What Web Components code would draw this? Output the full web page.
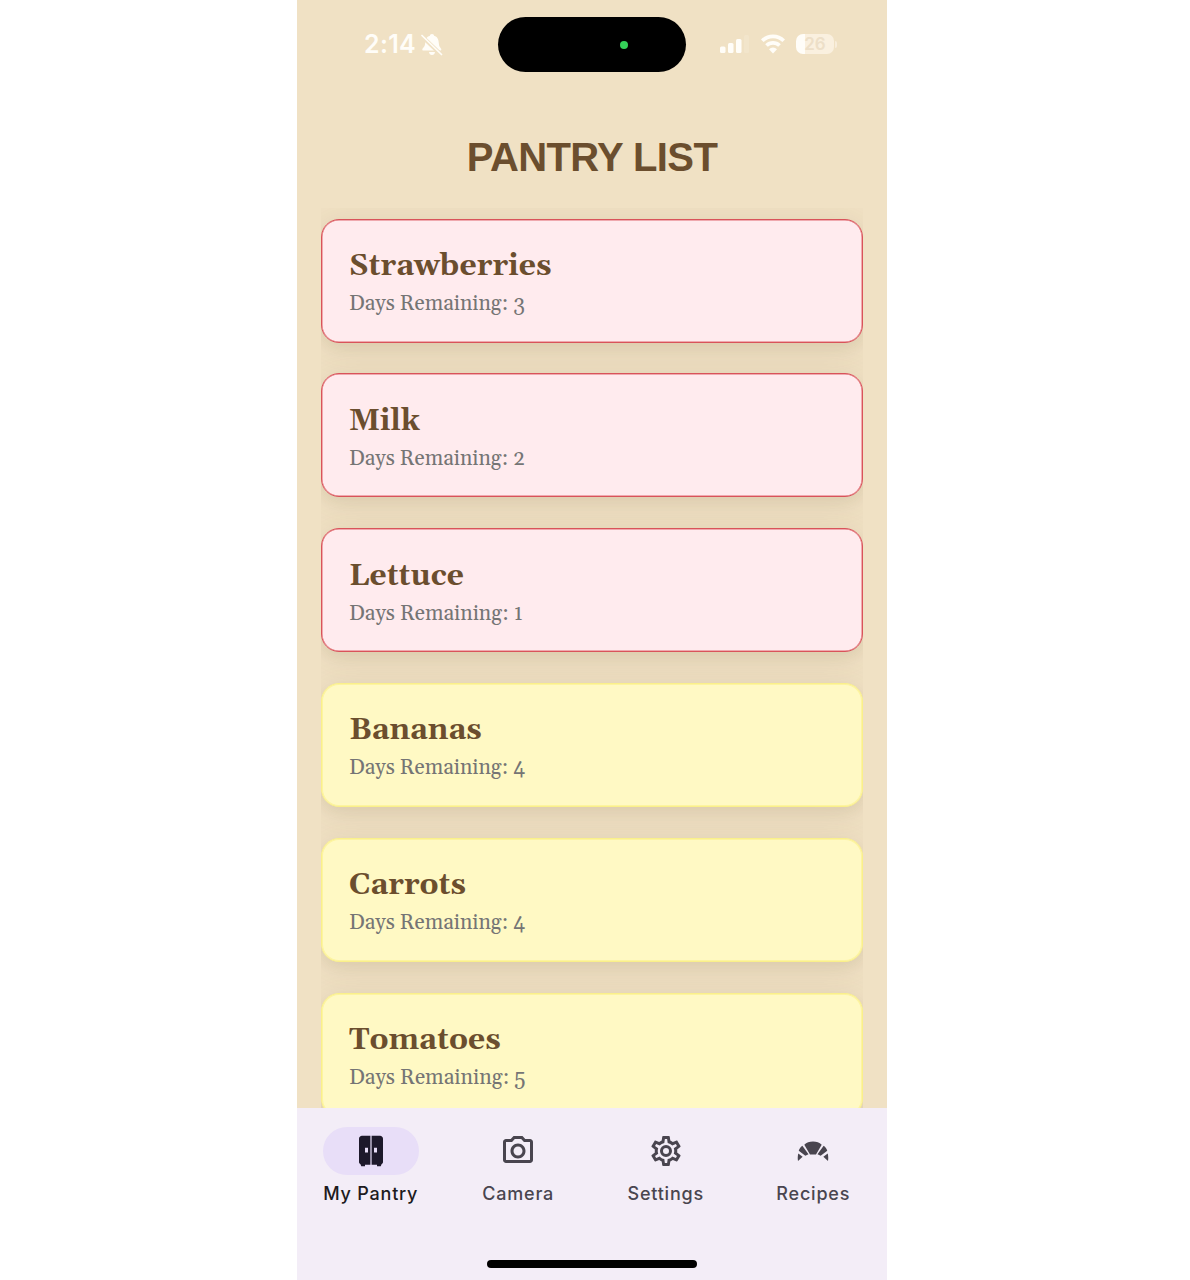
<!DOCTYPE html>
<html lang="en"><head><meta charset="utf-8"><title>Pantry List</title>
<style>html,body{margin:0;background:#fff}body{width:1190px;height:1280px;overflow:hidden}</style></head>
<body><pantry-app></pantry-app>
<script>
const define=(name,html,setup)=>customElements.define(name,class extends HTMLElement{
  connectedCallback(){
    if(this.shadowRoot)return;
    const t=document.createElement('template');t.innerHTML=html;
    this.attachShadow({mode:'open'}).append(t.content.cloneNode(true));
    if(setup)setup(this,this.shadowRoot);
  }
});

define('status-bar',`<style>
:host{display:flex;height:89px;padding:0 40px 0 67px;box-sizing:border-box;align-items:center;color:#fffdf8;font-family:Inter,sans-serif}
.left,.right{display:flex;align-items:center;flex:none}
.left{width:134px;gap:5px}.time{font-size:25px;font-weight:600;letter-spacing:.3px;line-height:30px;margin-top:-1px}
.island{flex:none;width:188px;height:55px;border-radius:28px;background:#000;display:flex;align-items:center;justify-content:flex-end;padding-right:58px;box-sizing:border-box}
.dot{width:8px;height:8px;border-radius:50%;background:#34d058}
.right{padding-left:34px;gap:0;margin-top:-1px}
.bat{margin-left:11px;width:38px;height:20px;border-radius:7px;background:linear-gradient(90deg,#fffdf8 9px,#faf0df 9px);color:#eddfc8;font-size:17px;font-weight:600;line-height:20px;text-align:center}
svg{display:block}.tip{width:2px;height:7px;border-radius:0 2px 2px 0;background:#f8eddb;margin-left:1px}
</style>
<div class="left"><span class="time">2:14</span>
<svg width="22" height="22" viewBox="0 0 22 22" fill="currentColor"><path d="M11 0c1.500 0 2 1 2.100 1.700C16.500 2.800 17.600 5.500 17.800 9c.1 3.500 1.500 4.500 2.300 5.700.5.800.1 1.800-1 1.800H2.500c-1.100 0-1.500-1-1-1.800C2.400 13.500 4 12.500 4.200 9c.2-3.500 1.300-6.200 4.700-7.300C9 1 9.500 0 11 0zM8 18h6c-.2 1.900-1.300 3-3 3s-2.800-1.100-3-3z"/><path d="M0 1.500L20.500 21" stroke="#f0e1c4" stroke-width="4"/><path d="M1 1.500L20.500 20.500" stroke="currentColor" stroke-width="1.700" stroke-linecap="round"/></svg></div>
<div class="island"><i class="dot"></i></div>
<div class="right"><svg width="30" height="20" viewBox="0 0 30 20" fill="currentColor"><rect y="12.500" width="5.500" height="6.500" rx="1.500"/><rect x="8" y="9" width="5.500" height="10" rx="1.500"/><rect x="16" y="5" width="5.500" height="14" rx="1.500"/><rect x="24" y="1" width="5" height="18" rx="1.500" opacity=".15"/></svg>
<svg style="margin-left:11px" width="24" height="20" viewBox="0 0 24 20" fill="none" stroke="currentColor" stroke-width="3.700"><path d="M1.300 6.800a15.200 15.200 0 0 1 21.400 0"/><path d="M5.500 11.500a9.200 9.200 0 0 1 13 0"/><path d="M12 19.500l-4-4.200a5.600 5.600 0 0 1 8 0z" fill="currentColor" stroke="none"/></svg>
<div class="bat">26</div><i class="tip"></i></div>`);

define('pantry-item',`<style>
:host{display:block;flex:none;box-sizing:border-box;height:124px;border:1px solid #d9535a;border-radius:18px;background:#ffebee;padding:26.400px 27.500px 0 27px;box-shadow:inset 0 0 0 .5px #e0686e,0 6px 12px rgba(95,70,45,.05),0 5px 32px rgba(95,70,45,.12);font-family:Georgia,Gelasio,"Liberation Serif",serif}
:host([tone=warning]){background:#fff9c4;border-color:#faf08a;box-shadow:inset 0 0 0 1px #fdf4a0,0 6px 12px rgba(95,70,45,.05),0 5px 32px rgba(95,70,45,.12)}
h2{margin:0;font-size:31px;line-height:40px;color:#6b4e2e;width:max-content;transform-origin:0 50%}
p{margin:0;font-size:21px;line-height:36px;color:#757575;width:max-content;transform-origin:0 50%}
</style><h2><slot></slot></h2><p></p>`,(el,r)=>{
  const h=r.querySelector('h2'),p=r.querySelector('p');
  p.textContent='Days Remaining: '+el.getAttribute('days');
  const fit=(n,w)=>{n.style.transform='scaleX('+(w/n.offsetWidth)+')'};
  fit(h,+el.getAttribute('name-width'));fit(p,el.getAttribute('days')==='1'?173.500:176);
});

define('nav-item',`<style>
:host{display:flex;flex:1;flex-direction:column;align-items:center;color:#49454f;font-family:Inter,Roboto,sans-serif}
.pill{width:96px;height:48px;border-radius:24px;display:flex;align-items:center;justify-content:center}
:host([active]){color:#1d1b20}:host([active]) .pill{background:#e8def8}
.label{font-size:18px;line-height:24px;font-weight:450;letter-spacing:.78px;margin-top:6.600px;white-space:nowrap}
</style><div class="pill"><slot name="icon"></slot></div><div class="label"><slot></slot></div>`);

define('bottom-nav',`<style>
:host{display:flex;flex-direction:column;justify-content:space-between;align-items:center;flex:none;height:172px;background:#f3edf7;box-sizing:border-box;padding:19px 0 12px}
nav{display:flex;width:100%}.home{width:210px;height:8px;border-radius:4px;background:#000}svg{display:block}
</style><nav>
<nav-item active><svg slot="icon" width="36" height="36" viewBox="0 0 24 24" fill="#1d192b" fill-rule="evenodd"><path d="M6 1.800h5.600v19.400H8v1H5.500l-.5-1.300c-.6-.3-1-.8-1-1.500V3.800c0-1.100.9-2 2-2zM8 9.800v3.200h2V9.800zM12.400 1.800H18c1.100 0 2 .9 2 2v15.600c0 .7-.4 1.200-1 1.500l-.5 1.300H16v-1h-3.600zM14 9.800v3.200h2V9.800z"/></svg>My Pantry</nav-item>
<nav-item><svg slot="icon" width="36" height="36" viewBox="0 0 24 24" fill="currentColor"><path d="M20 4h-3.170L15 2H9L7.170 4H4c-1.100 0-2 .9-2 2v12c0 1.100.9 2 2 2h16c1.100 0 2-.9 2-2V6c0-1.100-.9-2-2-2zm0 14H4V6h4.050l1.830-2h4.240l1.830 2H20v12zM12 7c-2.760 0-5 2.240-5 5s2.240 5 5 5 5-2.240 5-5-2.240-5-5-5zm0 8c-1.650 0-3-1.350-3-3s1.350-3 3-3 3 1.350 3 3-1.350 3-3 3z"/></svg>Camera</nav-item>
<nav-item><svg slot="icon" width="36" height="36" viewBox="0 0 24 24" fill="currentColor"><path d="M12,8A4,4 0 0,1 16,12A4,4 0 0,1 12,16A4,4 0 0,1 8,12A4,4 0 0,1 12,8M12,10A2,2 0 0,0 10,12A2,2 0 0,0 12,14A2,2 0 0,0 14,12A2,2 0 0,0 12,10M10,22C9.75,22 9.54,21.82 9.5,21.58L9.13,18.93C8.5,18.68 7.96,18.34 7.44,17.94L4.95,18.95C4.73,19.03 4.46,18.95 4.34,18.73L2.34,15.27C2.21,15.05 2.27,14.78 2.46,14.63L4.57,12.97L4.5,12L4.57,11L2.46,9.37C2.27,9.22 2.21,8.95 2.34,8.73L4.34,5.27C4.46,5.05 4.73,4.96 4.95,5.05L7.44,6.05C7.96,5.66 8.5,5.32 9.13,5.07L9.5,2.42C9.54,2.18 9.75,2 10,2H14C14.25,2 14.46,2.18 14.5,2.42L14.87,5.07C15.5,5.32 16.04,5.66 16.56,6.05L19.05,5.05C19.27,4.96 19.54,5.05 19.66,5.27L21.66,8.73C21.79,8.95 21.73,9.22 21.54,9.37L19.43,11L19.5,12L19.43,13L21.54,14.63C21.73,14.78 21.79,15.05 21.66,15.27L19.66,18.73C19.54,18.95 19.27,19.04 19.05,18.95L16.56,17.95C16.04,18.34 15.5,18.68 14.87,18.93L14.5,21.58C14.46,21.82 14.25,22 14,22H10M11.25,4L10.88,6.61C9.68,6.86 8.62,7.5 7.85,8.39L5.44,7.35L4.69,8.65L6.8,10.2C6.4,11.37 6.4,12.64 6.8,13.8L4.68,15.36L5.43,16.66L7.86,15.62C8.63,16.5 9.68,17.14 10.87,17.38L11.24,20H12.76L13.13,17.39C14.32,17.14 15.37,16.5 16.14,15.62L18.57,16.66L19.32,15.36L17.2,13.81C17.6,12.64 17.6,11.37 17.2,10.2L19.31,8.65L18.56,7.35L16.15,8.39C15.38,7.5 14.32,6.86 13.12,6.62L12.75,4H11.25Z"/></svg>Settings</nav-item>
<nav-item><svg slot="icon" width="36" height="36" viewBox="0 0 24 24" fill="currentColor"><path d="M6.200 7.800C7.700 6.400 9.600 5.700 12 5.700s4.300.7 5.800 2.100L14 14.400h-4zM4.900 8.500L9 14.100l-2.100 1.100-4.400-3.400c.4-1.300 1.200-2.400 2.400-3.300zM19.100 8.500L15 14.100l2.100 1.100 4.400-3.400c-.4-1.300-1.200-2.400-2.400-3.300zM2.200 13.700l2.900 2.200L2 18.700c-.3-1.700-.2-3.500.2-5zM21.800 13.700l-2.900 2.200 3.100 2.800c.3-1.700.2-3.500-.2-5z"/></svg>Recipes</nav-item>
</nav><div class="home"></div>`);

define('pantry-app',`<style>
:host{display:flex;flex-direction:column;width:590px;height:1280px;margin-left:297px;background:#f0e1c4}
status-bar{flex:none}
h1{margin:0;flex:none;height:119px;padding-top:44px;box-sizing:border-box;text-align:center;font:bold 40px/48px "Liberation Sans",sans-serif;color:#6b4e2e;letter-spacing:-.6px}
.list{flex:1;min-height:0;overflow:hidden;margin:0 24px;padding-top:10.600px;display:flex;flex-direction:column;gap:30.800px}
</style><status-bar></status-bar><h1>PANTRY LIST</h1><div class="list">
<pantry-item days="3" name-width="202">Strawberries</pantry-item>
<pantry-item days="2" name-width="71">Milk</pantry-item>
<pantry-item days="1" name-width="115">Lettuce</pantry-item>
<pantry-item tone="warning" days="4" name-width="133">Bananas</pantry-item>
<pantry-item tone="warning" days="4" name-width="117">Carrots</pantry-item>
<pantry-item tone="warning" days="5" name-width="152">Tomatoes</pantry-item>
</div><bottom-nav></bottom-nav>`);
</script></body></html>
